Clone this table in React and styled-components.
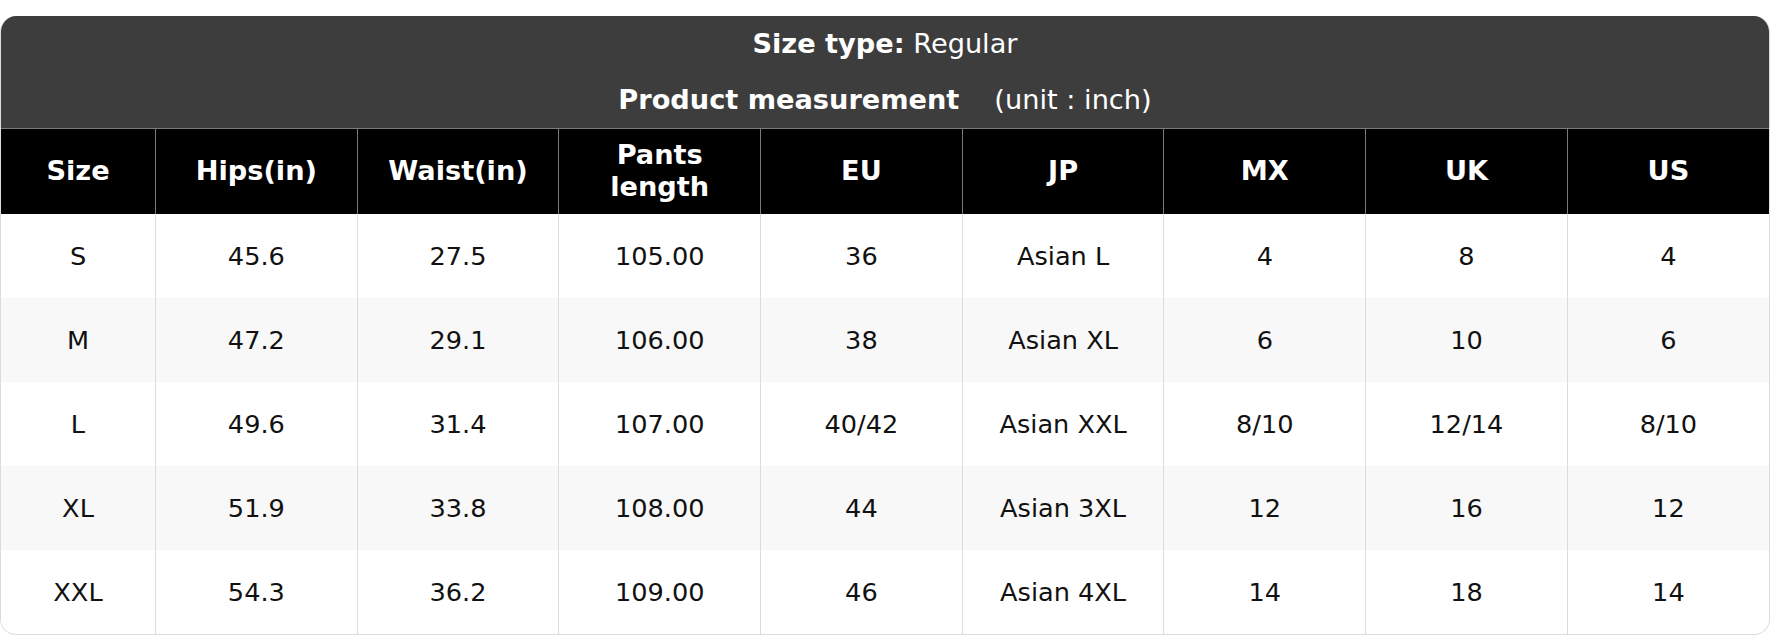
import React from "react";
import styled, { createGlobalStyle } from "styled-components";

const Global = createGlobalStyle`
  html, body { margin: 0; padding: 0; background: #fff; }
  body { font-family: "DejaVu Sans", "Liberation Sans", sans-serif; color: #111; }
`;

const Page = styled.div`
  padding-top: 16px;
`;

const Card = styled.div`
  border: 1px solid #dcdcdc;
  border-top: none;
  border-radius: 16px;
  overflow: hidden;
  background: #fff;
`;

const TitleBar = styled.div`
  background: #3d3d3d;
  color: #fff;
  display: flex;
  flex-direction: column;
`;

const TitleLine = styled.div`
  height: 56px;
  display: flex;
  align-items: center;
  justify-content: center;
  font-size: 27.2px;
  line-height: 1;
`;

const Strong = styled.span`
  font-weight: 700;
`;

const Unit = styled.span`
  font-weight: 400;
  margin-left: ${(p) => p.$gap || 0}px;
`;

const Table = styled.table`
  width: 100%;
  border-collapse: collapse;
  table-layout: fixed;
`;

const HeadRow = styled.tr`
  background: #000;
  height: 85px;
  border-top: 1px solid #7a7a7a;
`;

const HeadCell = styled.th`
  color: #fff;
  font-weight: 700;
  font-size: 27.2px;
  line-height: 32px;
  text-align: center;
  padding: 0 8px;
  border-left: 1px solid #7a7a7a;
  width: ${(p) => (p.$w ? `${p.$w}px` : "auto")};
  &:first-child { border-left: none; }
`;

const Row = styled.tr`
  height: 84px;
  background: ${(p) => (p.$alt ? "#f8f8f8" : "#fff")};
`;

const Cell = styled.td`
  font-size: 25.6px;
  color: #111;
  text-align: center;
  padding: 0 8px;
  border-left: 1px solid #dcdcdc;
  &:first-child { border-left: none; }
`;

const headers = ["Size", "Hips(in)", "Waist(in)", "Pants length", "EU", "JP", "MX", "UK", "US"];

const rows = [
  ["S", "45.6", "27.5", "105.00", "36", "Asian L", "4", "8", "4"],
  ["M", "47.2", "29.1", "106.00", "38", "Asian XL", "6", "10", "6"],
  ["L", "49.6", "31.4", "107.00", "40/42", "Asian XXL", "8/10", "12/14", "8/10"],
  ["XL", "51.9", "33.8", "108.00", "44", "Asian 3XL", "12", "16", "12"],
  ["XXL", "54.3", "36.2", "109.00", "46", "Asian 4XL", "14", "18", "14"],
];

export default function App() {
  return (
    <Page>
      <Global />
      <Card>
        <TitleBar>
          <TitleLine>
            <Strong>Size type:</Strong>
            <Unit>&nbsp;Regular</Unit>
          </TitleLine>
          <TitleLine>
            <Strong>Product measurement</Strong>
            <Unit $gap={35}>(unit : inch)</Unit>
          </TitleLine>
        </TitleBar>
        <Table>
          <thead>
            <HeadRow>
              {headers.map((h, i) => (
                <HeadCell key={h} $w={i === 0 ? 138 : undefined}>
                  {h}
                </HeadCell>
              ))}
            </HeadRow>
          </thead>
          <tbody>
            {rows.map((r, i) => (
              <Row key={r[0]} $alt={i % 2 === 1}>
                {r.map((c, j) => (
                  <Cell key={j}>{c}</Cell>
                ))}
              </Row>
            ))}
          </tbody>
        </Table>
      </Card>
    </Page>
  );
}
